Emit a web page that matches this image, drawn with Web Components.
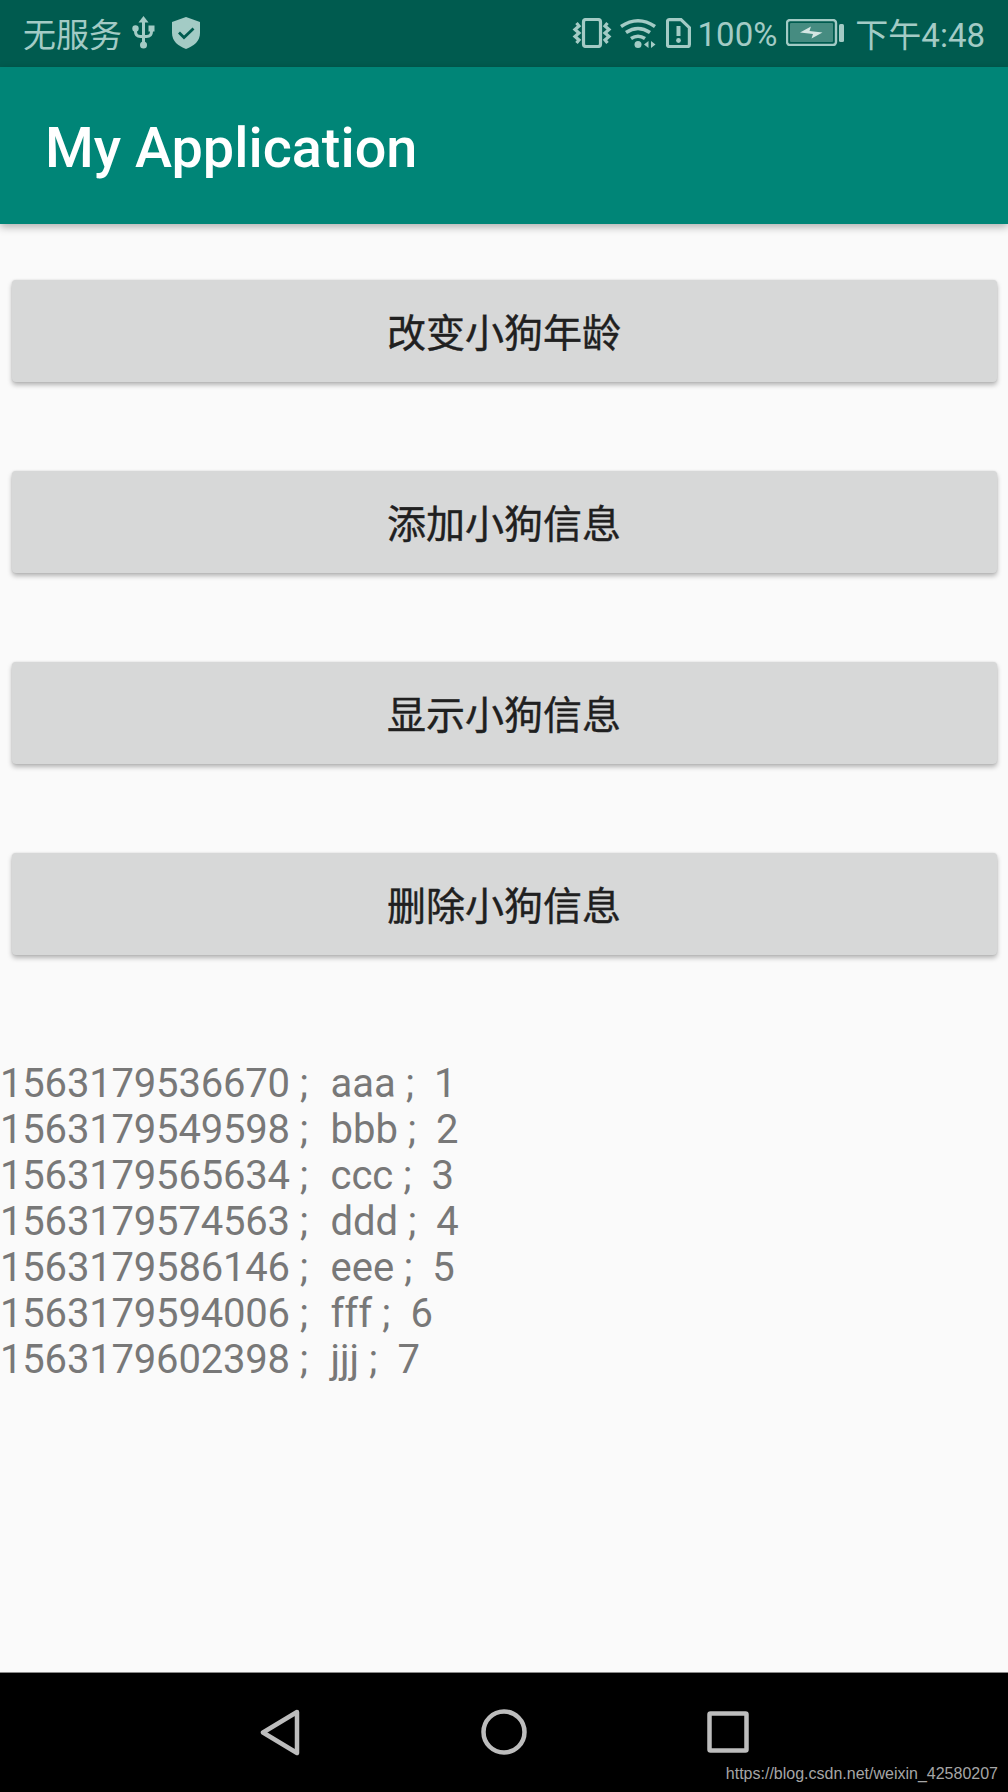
<!DOCTYPE html>
<html lang="zh">
<head>
<meta charset="utf-8">
<title>My Application</title>
<style>
  html, body { margin: 0; height: 100%; }
  body { font-family: Roboto, "Noto Sans CJK SC", sans-serif; background: #fafafa; }
  phone-screen { height: 1792px; }
</style>
</head>
<body>
<phone-screen>
  <status-bar></status-bar>
  <app-bar>My Application</app-bar>
  <main-area>
    <app-button>改变小狗年龄</app-button>
    <app-button>添加小狗信息</app-button>
    <app-button>显示小狗信息</app-button>
    <app-button>删除小狗信息</app-button>
    <dog-list></dog-list>
  </main-area>
  <nav-bar></nav-bar>
</phone-screen>

<script>
class PhoneScreen extends HTMLElement {
  constructor() {
    super();
    this.attachShadow({ mode: "open" });
    this.shadowRoot.innerHTML = `
      <style>
        :host { display: flex; flex-direction: column; width: 100%; position: relative; overflow: hidden; }
      </style>
      <slot></slot>`;
  }
}

class StatusBar extends HTMLElement {
  constructor() {
    super();
    this.attachShadow({ mode: "open" });
    this.shadowRoot.innerHTML = `
      <style>
        :host {
          display: flex; align-items: center; justify-content: space-between;
          height: 67px; box-sizing: border-box; padding: 0 23px 2px 23px;
          background: #005b4f; color: #a3cbc5;
          font: 33px Roboto, "Noto Sans CJK SC", sans-serif;
        }
        .group { display: flex; align-items: center; }
        svg { display: block; flex: none; }
        .usb { margin-left: 10px; }
        .shield { margin-left: 17px; }
        .vib { margin-right: 8px; }
        .wifi { margin-right: 9px; }
        .sim { margin-right: 7px; }
        .pct { padding-top: 4px; }
        .batt { margin-left: 9px; margin-right: 11px; }
      </style>
      <div class="group">
        <span>无服务</span>
        <svg class="usb" width="23" height="33" viewBox="0 0 23 33" fill="none" stroke="#a3cbc5" stroke-width="3">
          <path d="M11.500 4v25"/>
          <path d="M11.500 0l5 6.500h-10z" fill="#a3cbc5" stroke="none"/>
          <circle cx="11.500" cy="29" r="3.500" fill="#a3cbc5" stroke="none"/>
          <path d="M3.500 13v2.500q0 5 5 5h6q5 0 5-5V13"/>
          <circle cx="3.500" cy="12.500" r="3.200" fill="#a3cbc5" stroke="none"/>
          <rect x="16.500" y="9.500" width="6" height="6" fill="#a3cbc5" stroke="none"/>
        </svg>
        <svg class="shield" width="28" height="32" viewBox="0 0 28 32">
          <path d="M14 0L28 5v11c0 8-6 13-14 16C6 29 0 24 0 16V5z" fill="#a3cbc5"/>
          <path d="M7 15.500l5 5 9.500-9" fill="none" stroke="#005b4f" stroke-width="2.800"/>
        </svg>
      </div>
      <div class="group">
        <svg class="vib" width="40" height="30" viewBox="0 0 40 30" fill="none" stroke="#a3cbc5" stroke-width="3.200">
          <rect x="11.500" y="1.500" width="17" height="27" rx="2.500"/>
          <path d="M4.500 5l2.500 3-4 3.500 4 3.500-4 3.500 4 3.500-2.500 3"/>
          <path d="M35.500 5l-2.500 3 4 3.500-4 3.500 4 3.500-4 3.500 2.500 3"/>
        </svg>
        <svg class="wifi" width="37" height="30" viewBox="0 0 37 30" fill="none" stroke="#a3cbc5" stroke-width="3.600">
          <path d="M1 8.500Q18-3 35 8.500"/>
          <path d="M6 14.500q12-8 24 0"/>
          <path d="M11 20.500q7-4.500 14 0"/>
          <circle cx="18" cy="26.500" r="3.500" fill="#a3cbc5" stroke="none"/>
          <path d="M24 26.500l4.500-3.500v7zM31 23l4.500 3.500-4.500 3.500z" fill="#a3cbc5" stroke="none"/>
        </svg>
        <svg class="sim" width="25" height="30" viewBox="0 0 25 30" fill="none" stroke="#a3cbc5" stroke-width="3.200">
          <path d="M3.500 1.600h11.500l8.400 8v17a2 2 0 0 1-2 2h-18a2 2 0 0 1-2-2v-23a2 2 0 0 1 2-2z"/>
          <path d="M12.500 8v10" stroke-width="4"/>
          <circle cx="12.500" cy="22.500" r="2.400" fill="#a3cbc5" stroke="none"/>
        </svg>
        <span class="pct">100%</span>
        <svg class="batt" width="58" height="27" viewBox="0 0 58 27">
          <rect x="1" y="1" width="49" height="25" rx="3" fill="none" stroke="#a3cbc5" stroke-width="2.400"/>
          <rect x="4" y="4" width="43" height="19" rx="1" fill="#468c81"/>
          <path d="M14 13.500l11-6-1.500 4.500 13 1.500-11 6 1.500-4.500z" fill="#d5e6e3"/>
          <rect x="53" y="5" width="5" height="18" rx="1.500" fill="#a3cbc5"/>
        </svg>
        <span>下午4:48</span>
      </div>`;
  }
}

class AppBar extends HTMLElement {
  constructor() {
    super();
    this.attachShadow({ mode: "open" });
    this.shadowRoot.innerHTML = `
      <style>
        :host {
          display: flex; align-items: center;
          height: 157px; box-sizing: border-box; padding: 5px 0 0 45px;
          background: #008577; color: #fff;
          font: 500 55.8px Roboto, sans-serif;
          box-shadow: 0 3px 8px rgba(0,0,0,.3);
          position: relative; z-index: 1;
        }
      </style>
      <slot></slot>`;
  }
}

class MainArea extends HTMLElement {
  constructor() {
    super();
    this.attachShadow({ mode: "open" });
    this.shadowRoot.innerHTML = `
      <style>
        :host {
          display: flex; flex-direction: column; gap: 88px;
          flex: 1; padding-top: 56px; background: #fafafa;
        }
      </style>
      <slot></slot>`;
  }
}

class AppButton extends HTMLElement {
  constructor() {
    super();
    this.attachShadow({ mode: "open" });
    this.shadowRoot.innerHTML = `
      <style>
        :host {
          display: flex; align-items: center; justify-content: center;
          height: 102px; box-sizing: border-box; padding: 0 1px 2px 0;
          margin: 0 11px 1px 12px;
          background: #d7d8d8; color: #202020; border-radius: 4px;
          font: 39px "Noto Sans CJK SC", sans-serif;
          -webkit-text-stroke: .4px #202020;
          box-shadow: 0 3px 5px rgba(0,0,0,.28), 0 0 2px rgba(0,0,0,.12);
        }
      </style>
      <slot></slot>`;
  }
}

class DogList extends HTMLElement {
  constructor() {
    super();
    this.attachShadow({ mode: "open" });
    const rows = [
      ["1563179536670", "aaa", 1],
      ["1563179549598", "bbb", 2],
      ["1563179565634", "ccc", 3],
      ["1563179574563", "ddd", 4],
      ["1563179586146", "eee", 5],
      ["1563179594006", "fff", 6],
      ["1563179602398", "jjj", 7],
    ];
    this.shadowRoot.innerHTML = `
      <style>
        :host {
          display: block; margin-top: 17px;
          color: #787878;
          font: 40px/46px Roboto, sans-serif;
        }
        div { white-space: pre; }
        .id { letter-spacing: -.18px; }
        .gap { letter-spacing: 1.15px; }
      </style>
      ${rows.map((r) => `<div><span class="id">${r[0]}</span> ;<span class="gap">  </span>${r[1]} ;  ${r[2]}</div>`).join("")}`;
  }
}

class NavBar extends HTMLElement {
  constructor() {
    super();
    this.attachShadow({ mode: "open" });
    this.shadowRoot.innerHTML = `
      <style>
        :host {
          display: flex; align-items: flex-start; flex: none;
          height: 120px; box-sizing: border-box; padding: 36px 0 0 260px;
          background: #000; border-top: 1px solid #8a8a8a;
          position: relative;
        }
        svg { display: block; flex: none; }
        .home { margin-left: 181px; }
        .recent { margin-left: 180px; margin-top: 2px; }
        .mark {
          position: absolute; right: 10px; bottom: 9px;
          color: #a6a6a6; font: 16px "Liberation Sans", sans-serif;
        }
      </style>
      <svg width="40" height="47" viewBox="0 0 40 47" fill="none" stroke="#bdbdbd" stroke-width="4.500" stroke-linejoin="round">
        <path d="M37 3L3 23.500 37 44z"/>
      </svg>
      <svg class="home" width="46" height="46" viewBox="0 0 46 46" fill="none" stroke="#bdbdbd" stroke-width="4.500">
        <circle cx="23" cy="23" r="20.500"/>
      </svg>
      <svg class="recent" width="42" height="42" viewBox="0 0 42 42" fill="none" stroke="#bdbdbd" stroke-width="4.500" stroke-linejoin="round">
        <rect x="2.500" y="2.500" width="37" height="37" rx="1"/>
      </svg>
      <span class="mark">https://blog.csdn.net/weixin_42580207</span>`;
  }
}

customElements.define("phone-screen", PhoneScreen);
customElements.define("status-bar", StatusBar);
customElements.define("app-bar", AppBar);
customElements.define("main-area", MainArea);
customElements.define("app-button", AppButton);
customElements.define("dog-list", DogList);
customElements.define("nav-bar", NavBar);
</script>
</body>
</html>
